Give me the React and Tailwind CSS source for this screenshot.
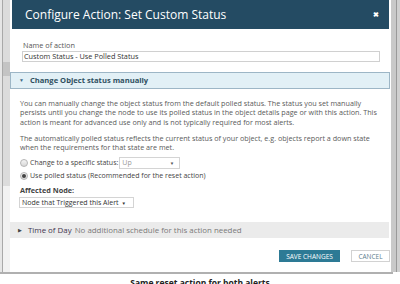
import React from 'react';

const font = { fontFamily: '"Open Sans", "Liberation Sans", sans-serif' };

const Radio = ({ checked }) => (
  <span className="w-[8px] h-[8px] rounded-full border border-[#b5b5b5] bg-gradient-to-b from-[#f4f4f4] to-[#d8d8d8] flex items-center justify-center shrink-0">
    {checked && <span className="w-[4px] h-[4px] rounded-full bg-[#444]" />}
  </span>
);

export default function App() {
  return (
    <div className="w-[400px] h-[284px] overflow-hidden bg-white" style={font}>
      <div className="flex h-[272px]">
        {/* page behind the overlay, left */}
        <div className="w-[10px] flex">
          <div className="w-[2px] bg-[#e6e6e6]" />
          <div className="w-[1px] bg-[#a9a9a9]" />
          <div className="flex-1 flex flex-col">
            <div className="h-[62px] bg-[#dcdcdc]" />
            <div className="h-[14px] bg-[#c4c4c4]" />
            <div className="h-[110px] bg-[#dcdcdc]" />
            <div className="flex-1 bg-[#f2f2f2]" />
          </div>
        </div>

        {/* modal */}
        <div className="w-[381px] bg-white flex flex-col">
          <div className="mx-[2px] h-[29px] bg-[#244b63] flex items-center justify-between pl-[13px] pr-[10px]">
            <span className="text-white text-[12px] leading-none">Configure Action: Set Custom Status</span>
            <span className="text-white text-[7px] font-bold leading-none">&#x2716;</span>
          </div>

          <div className="pl-[13px] mt-[12px] text-[7.3px] leading-[9px] text-[#555]">Name of action</div>
          <div className="ml-[12px] mr-[11px] mt-[1px] h-[11px] border border-[#d0d0d0] flex items-center px-[1px] text-[7.3px] text-[#333]">
            Custom Status - Use Polled Status
          </div>

          <div className="mt-[10px] mr-[1px] h-[17px] border border-[#9db6c6] bg-[#e2f0f6] flex items-center pl-[8px]">
            <span className="text-[5px] text-[#3b6a86] mr-[6px] leading-none">&#9660;</span>
            <span className="text-[7.6px] font-bold text-[#2f4f60] leading-none">Change Object status manually</span>
          </div>

          <div className="pl-[10px] pr-[12px] mt-[10px] text-[7.2px] leading-[9.3px] text-[#5a5a5a]">
            <p>
              You can manually change the object status from the default polled status. The status you set manually
              persists until you change the node to use its polled status in the object details page or with this action. This
              action is meant for advanced use only and is not typically required for most alerts.
            </p>
            <p className="mt-[7px]">
              The automatically polled status reflects the current status of your object, e.g. objects report a down state
              when the requirements for that state are met.
            </p>
          </div>

          <div className="pl-[10px] mt-[5px] flex items-center h-[12px] text-[7px] text-[#444]">
            <Radio />
            <span className="ml-[2px]">Change to a specific status:</span>
            <span className="ml-[1px] w-[61px] h-[12px] border border-[#d4d4d4] flex items-center justify-between px-[2px] text-[#999]">
              <span>Up</span>
              <span className="text-[4.5px] text-[#555] mr-[3px]">&#9660;</span>
            </span>
          </div>
          <div className="pl-[10px] mt-[1px] flex items-center h-[11px] text-[7px] text-[#444]">
            <Radio checked />
            <span className="ml-[2px]">Use polled status (Recommended for the reset action)</span>
          </div>

          <div className="pl-[10px] mt-[5px] text-[7.3px] leading-[9px] font-bold text-[#444]">Affected Node:</div>
          <div className="ml-[9px] mt-[2px] w-[115px] h-[11px] border border-[#d4d4d4] flex items-center px-[2px] text-[7px] text-[#333]">
            <span>Node that Triggered this Alert</span>
            <span className="ml-[3px] text-[4.5px] text-[#333]">&#9660;</span>
          </div>

          <div className="mt-[14px] mr-[2px] h-[16px] bg-[#ebebeb] flex items-center pl-[8px] text-[7.9px] leading-none">
            <span className="text-[5px] text-[#444] mr-[6px]">&#9654;</span>
            <span className="text-[#3f3550]">Time of Day</span>
            <span className="ml-[3px] text-[#7a7a7a]">No additional schedule for this action needed</span>
          </div>

          <div className="mt-[12px] flex justify-end gap-[11px] pr-[1px]">
            <div className="w-[61px] h-[12px] bg-[#2d7a95] text-white text-[6.5px] flex items-center justify-center">SAVE CHANGES</div>
            <div className="w-[39px] h-[12px] border border-[#d2d2d2] text-[#5f7f8f] text-[6.5px] flex items-center justify-center">CANCEL</div>
          </div>
        </div>

        {/* page behind the overlay, right */}
        <div className="flex-1 flex">
          <div className="w-[5px] bg-[#c9c9c9]" />
          <div className="w-[1px] bg-[#9a9a9a]" />
          <div className="flex-1 bg-[#d0d0d0]" />
        </div>
      </div>
      <div className="h-[2px] bg-[#b0b0b0] w-[393px]" />
      <div className="mt-[5px] text-center text-[8.5px] font-bold text-[#222] leading-none">Same reset action for both alerts</div>
    </div>
  );
}
